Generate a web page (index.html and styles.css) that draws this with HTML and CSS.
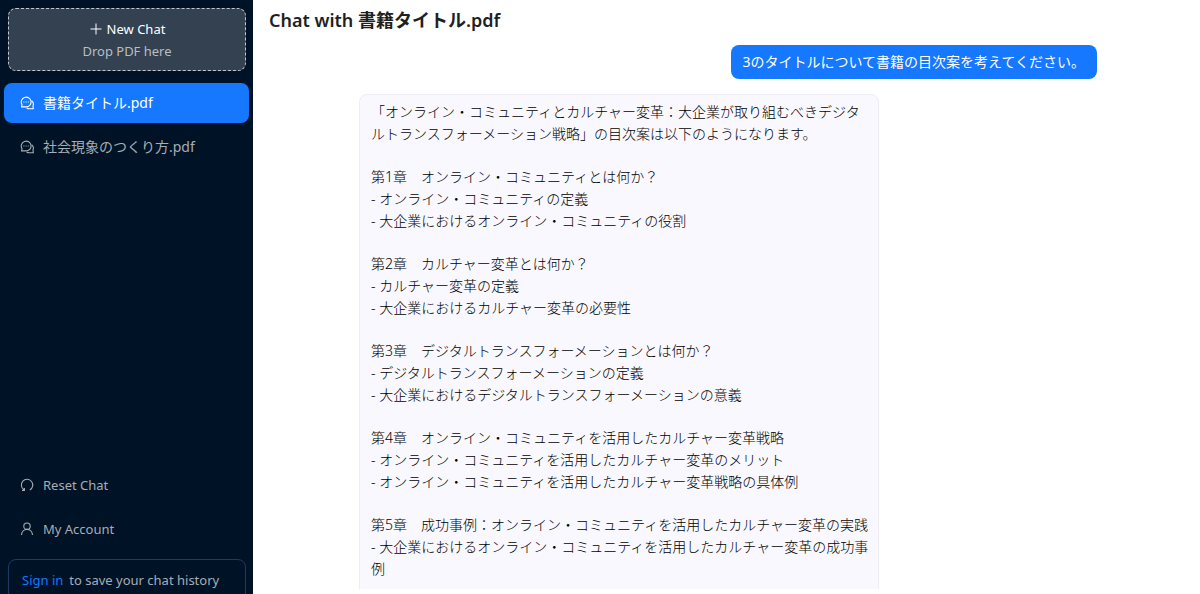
FILE: index.html
```html
<!DOCTYPE html>
<html lang="ja">
<head>
<meta charset="utf-8">
<title>Chat</title>
<link rel="stylesheet" href="styles.css">
</head>
<body>
<div class="app">
  <aside class="sidebar">
    <button class="new-chat" type="button">
      <span class="new-chat-title"><svg class="plus" viewBox="0 0 14 14"><path d="M7 1.500v11M1.500 7h11"/></svg>New Chat</span>
      <span class="new-chat-hint">Drop PDF here</span>
    </button>
    <nav class="menu">
      <a class="item active" href="#"><svg class="icon" viewBox="0 0 14 14"><path d="M1.600 10.900l.4-2.300A4.900 4.900 0 1 1 5.900 10.900z"/><path d="M11.600 4.800A4.400 4.400 0 0 1 13 10l.3 2.800H9.500A4.600 4.600 0 0 1 6.600 12"/><path class="dots" d="M3.400 6h1M5.600 6h1M7.800 6h1"/></svg>書籍タイトル.pdf</a>
      <a class="item" href="#"><svg class="icon" viewBox="0 0 14 14"><path d="M1.600 10.900l.4-2.300A4.900 4.900 0 1 1 5.900 10.900z"/><path d="M11.600 4.800A4.400 4.400 0 0 1 13 10l.3 2.800H9.500A4.600 4.600 0 0 1 6.600 12"/><path class="dots" d="M3.400 6h1M5.600 6h1M7.800 6h1"/></svg>社会現象のつくり方.pdf</a>
    </nav>
    <nav class="menu menu-bottom">
      <a class="item latin" href="#"><svg class="icon" viewBox="0 0 14 14"><path d="M9.800 12A5.700 5.700 0 1 0 4 11.800M2 12.400h2.400V10"/></svg>Reset Chat</a>
      <a class="item latin" href="#"><svg class="icon" viewBox="0 0 14 14"><circle cx="7" cy="4.200" r="3.200"/><path d="M1.500 13c.2-3.200 2.600-5.600 5.500-5.600s5.300 2.400 5.500 5.600"/></svg>My Account</a>
    </nav>
    <div class="signin latin"><a href="#">Sign in</a><span>to save your chat history</span></div>
  </aside>
  <main class="main">
    <h1 class="title">Chat with 書籍タイトル.pdf</h1>
    <div class="messages">
      <div class="bubble user">3のタイトルについて書籍の目次案を考えてください。</div>
      <div class="bubble reply">
        <p>「オンライン・コミュニティとカルチャー変革：大企業が取り組むべきデジタルトランスフォーメーション戦略」の目次案は以下のようになります。</p>
        <p>第1章　オンライン・コミュニティとは何か？<br>- オンライン・コミュニティの定義<br>- 大企業におけるオンライン・コミュニティの役割</p>
        <p>第2章　カルチャー変革とは何か？<br>- カルチャー変革の定義<br>- 大企業におけるカルチャー変革の必要性</p>
        <p>第3章　デジタルトランスフォーメーションとは何か？<br>- デジタルトランスフォーメーションの定義<br>- 大企業におけるデジタルトランスフォーメーションの意義</p>
        <p>第4章　オンライン・コミュニティを活用したカルチャー変革戦略<br>- オンライン・コミュニティを活用したカルチャー変革のメリット<br>- オンライン・コミュニティを活用したカルチャー変革戦略の具体例</p>
        <p>第5章　成功事例：オンライン・コミュニティを活用したカルチャー変革の実践<br>- 大企業におけるオンライン・コミュニティを活用したカルチャー変革の成功事例</p>
      </div>
    </div>
  </main>
</div>
</body>
</html>
```
FILE: styles.css
```css
* { box-sizing: border-box; }
body {
  margin: 0;
  font: 14px/22px "Noto Sans", "Noto Sans CJK JP", sans-serif;
  color: #1f1f1f;
  background: #fff;
}
a { text-decoration: none; }
.app { display: flex; height: 100vh; overflow: hidden; }
.sidebar {
  display: flex;
  flex-direction: column;
  flex: 0 0 253px;
  overflow: hidden;
  background: #001326;
}
.new-chat {
  display: flex;
  flex-direction: column;
  flex-shrink: 0;
  align-items: center;
  margin: 8px 7px 8px 8px;
  padding: 9px 0 8px;
  font: inherit;
  font-size: 13px;
  color: #b9bec4;
  background: #334150;
  border: 1px dashed #c4c8cc;
  border-radius: 8px;
}
.new-chat-title { display: flex; align-items: center; gap: 4px; color: #fff; }
.plus { width: 14px; height: 14px; fill: none; stroke: currentColor; }
.menu { display: flex; flex-direction: column; padding: 4px; gap: 4px; }
.menu-bottom { margin-top: auto; }
.item {
  display: flex;
  align-items: center;
  flex-shrink: 0;
  height: 40px;
  padding: 0 16px;
  gap: 9px;
  color: #a6adb4;
  border-radius: 8px;
}
.item.active { color: #fff; background: #1677ff; }
.latin { font-size: 13px; }
.icon { width: 14px; height: 14px; fill: none; stroke: currentColor; stroke-width: 1.1; }
.signin {
  display: flex;
  flex-shrink: 0;
  gap: 6px;
  height: 52px;
  margin: 6px 7px -17px 8px;
  padding: 9px 13px;
  color: #a6adb4;
  border: 1px solid #1d3b63;
  border-radius: 8px;
  white-space: nowrap;
}
.signin a { color: #1677ff; }
.main {
  display: flex;
  flex-direction: column;
  flex: 1;
  min-width: 0;
  padding: 8px 16px 5px;
}
.title { margin: 0 0 13px; font-size: 18px; line-height: 24px; font-weight: 600; }
.messages {
  display: flex;
  flex-direction: column;
  flex: 1;
  min-height: 0;
  padding: 0 87px 0 90px;
  gap: 15px;
  overflow: hidden;
}
.bubble { flex-shrink: 0; max-width: 520px; border-radius: 8px; }
.user { align-self: flex-end; padding: 6px 12px; color: #fff; background: #1677ff; }
.reply {
  display: flex;
  flex-direction: column;
  align-self: flex-start;
  gap: 21px;
  padding: 6px 8px 28px 11px;
  font-weight: 300;
  color: #000;
  background: #f9f8fe;
  border: 1px solid #ededf3;
}
.reply p { margin: 0; line-break: anywhere; }
```
